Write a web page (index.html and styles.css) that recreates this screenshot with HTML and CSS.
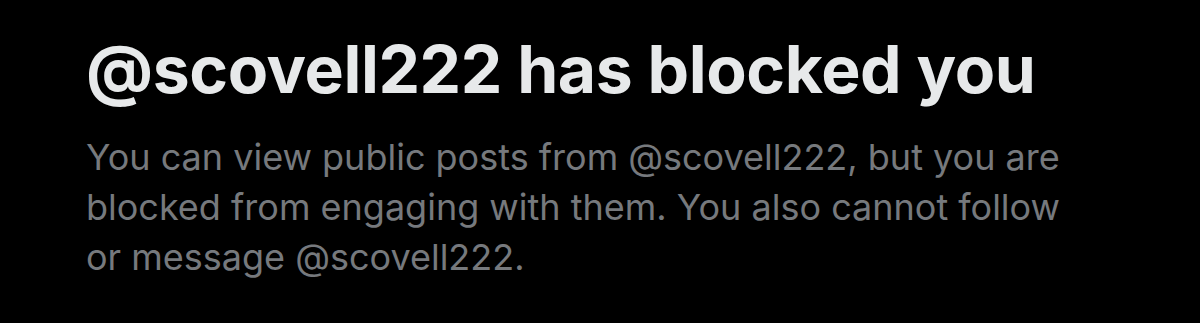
FILE: index.html
```html
<!DOCTYPE html>
<html lang="en">
<head>
    <meta charset="UTF-8">
    <title>Blocked</title>
    <link rel="stylesheet" href="styles.css">
</head>
<body>
    <div class="blocked-notice">
        <h1 class="blocked-title">@scovell222 has blocked you</h1>
        <p class="blocked-text">You can view public posts from @scovell222, but you are blocked from engaging with them. You also cannot follow or message @scovell222.</p>
    </div>
</body>
</html>
```

FILE: styles.css
```css
html, body {
    margin: 0;
    background: #000;
}
.blocked-notice {
    padding: 31px 0 0 86px;
    width: 1000px;
    font-family: Inter, "Noto Sans", sans-serif;
}
.blocked-title {
    margin: 0;
    font-size: 66px;
    line-height: 76px;
    font-weight: 700;
    color: #e7e9ea;
    letter-spacing: -0.4px;
}
.blocked-text {
    margin: 25px 0 0;
    font-size: 36px;
    line-height: 50px;
    color: #76797d;
}
```
